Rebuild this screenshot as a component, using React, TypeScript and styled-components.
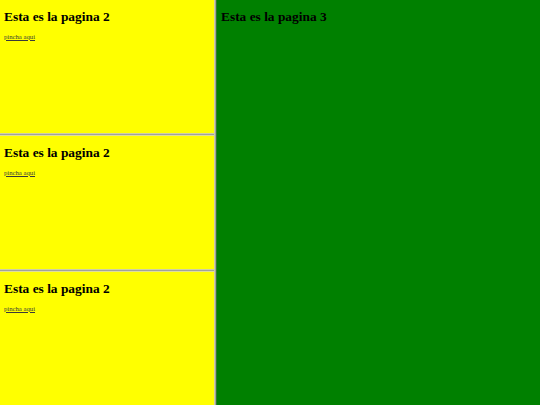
import { createGlobalStyle } from "styled-components";
import styled from "styled-components";

const GlobalStyle = createGlobalStyle`
html, body {
  margin: 0;
  padding: 0;
  width: 540px;
  height: 405px;
  overflow: hidden;
}
body {
  font-family: "Liberation Serif", "Times New Roman", serif;
  color: #000;
}
`;

const FrameSet = styled.div`
  display: grid;
  grid-template-columns: 214px 3px 1fr;
  width: 540px;
  height: 405px;
`;

const Column = styled.div`
  display: grid;
  grid-template-rows: 133px 3px 133px 3px 133px;
  height: 405px;
`;

const Frame = styled.div<{ $bg: string }>`
  background: ${(p) => p.$bg};
  padding: 0 4px;
  overflow: hidden;
`;

const Divider = styled.div<{ $vertical?: boolean }>`
  background: ${(p) =>
    p.$vertical
      ? "linear-gradient(to right, #cfcfa6 0 1px, #a2a29c 1px 2px, #2f7a2f 2px 3px)"
      : "linear-gradient(to bottom, #cfcfa6 0 1px, #a2a29c 1px 2px, #dede9a 2px 3px)"};
`;

const Heading = styled.h2`
  margin: 9px 0 0;
  font-size: 13.4px;
  line-height: 15px;
  font-weight: bold;
`;

const Link = styled.a`
  display: block;
  margin-top: 8.7px;
  font-size: 6.7px;
  line-height: 8px;
  color: #3a3a3a;
  text-decoration: underline;
`;

const PageTwo = () => (
  <Frame $bg="#ffff00">
    <Heading>Esta es la pagina 2</Heading>
    <Link href="#">pincha aqui</Link>
  </Frame>
);

export default function App() {
  return (
    <>
      <GlobalStyle />
      <FrameSet>
        <Column>
          <PageTwo />
          <Divider />
          <PageTwo />
          <Divider />
          <PageTwo />
        </Column>
        <Divider $vertical />
        <Frame $bg="#008000">
          <Heading>Esta es la pagina 3</Heading>
        </Frame>
      </FrameSet>
    </>
  );
}
